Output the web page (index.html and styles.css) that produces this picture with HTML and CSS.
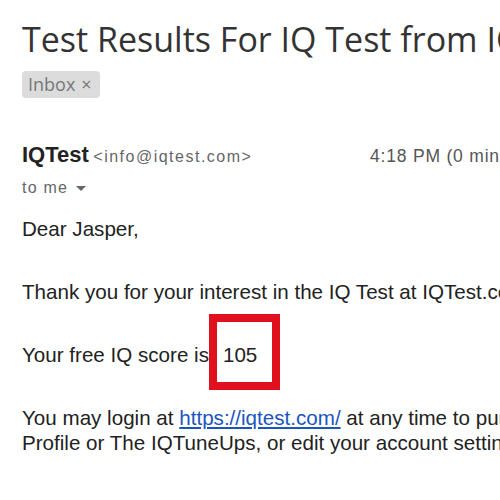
FILE: index.html
```html
<!DOCTYPE html>
<html>
<head>
<meta charset="utf-8">
<link rel="stylesheet" href="styles.css">
</head>
<body>
<div class="mail">
  <h1 class="subject">Test Results For IQ Test from IQTest.com</h1>
  <div class="chips"><span class="chip">Inbox<span class="x">×</span></span></div>
  <div class="head">
    <div class="from"><span class="name">IQTest</span> <span class="addr">&lt;info@iqtest.com&gt;</span></div>
    <div class="time">4:18 PM (0 minutes ago)</div>
  </div>
  <div class="to">to me <span class="caret"></span></div>
  <div class="body">
    <p>Dear Jasper,</p>
    <p>Thank you for your interest in the IQ Test at IQTest.com.</p>
    <p>Your free IQ score is<span class="score">105</span></p>
    <p>You may login at <a href="#">https://iqtest.com/</a> at any time to purchase your Full IQ<br>Profile or The IQTuneUps, or edit your account settings.</p>
  </div>
</div>
</body>
</html>
```
FILE: styles.css
```css
html, body { margin: 0; padding: 0; background: #fff; overflow: hidden; }
.mail { width: 760px; padding: 19px 0 0 22px; }
.subject { font-family: "Open Sans", sans-serif; font-weight: 400; font-size: 34px; color: #333; margin: 0; line-height: 40px; white-space: nowrap; }
.chips { margin-top: 12px; line-height: 0; }
.chip { display: inline-block; background: #dcdcdc; color: #777; font-family: "Open Sans", sans-serif; font-size: 18px; line-height: 27px; padding: 0 8px 0 6px; border-radius: 4px; }
.chip .x { margin-left: 6px; font-size: 18px; }
.head { display: flex; margin-top: 45px; font-family: "Liberation Sans", Arial, sans-serif; align-items: baseline; line-height: 24px; }
.from { width: 348px; white-space: nowrap; }
.name { font-weight: bold; font-size: 22px; color: #222; }
.addr { font-size: 16px; letter-spacing: 1.5px; color: #666; }
.time { font-size: 17.5px; color: #555; white-space: nowrap; letter-spacing: 0.8px; }
.to { font-family: "Liberation Sans", Arial, sans-serif; font-size: 16px; letter-spacing: 1.2px; line-height: 20px; color: #666; margin-top: 9px; }
.caret { display: inline-block; width: 0; height: 0; border-left: 5px solid transparent; border-right: 5px solid transparent; border-top: 5px solid #666; vertical-align: middle; margin-left: 2px; }
.body { font-family: "Liberation Sans", Arial, sans-serif; font-size: 20.6px; color: #222; margin-top: 18px; }
.body p { margin: 0 0 38px; line-height: 25px; white-space: nowrap; }
.score { display: inline-block; border: 8px solid #e0101e; padding: 20px 15px 15px 6px; margin: -28px 0 -23px 0; line-height: 25px; }
a { color: #1a55c0; }
```
